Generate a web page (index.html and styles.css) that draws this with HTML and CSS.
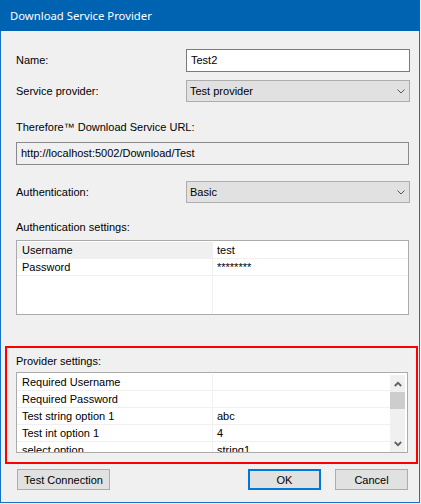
FILE: index.html
```html
<!DOCTYPE html>
<html>
<head>
<meta charset="utf-8">
<title>Download Service Provider</title>
<link rel="stylesheet" href="styles.css">
</head>
<body>
<div class="window">
  <div class="titlebar">Download Service Provider</div>
  <div class="content">
    <div class="field-row row-name">
      <span class="label">Name:</span>
      <div class="textbox">Test2</div>
    </div>
    <div class="field-row row-provider">
      <span class="label">Service provider:</span>
      <div class="combo">
        <span class="combo-text">Test provider</span>
        <svg class="chev" width="8" height="5" viewBox="0 0 8 5"><path d="M0.5 0.5 L4 4 L7.5 0.5"/></svg>
      </div>
    </div>
    <div class="caption cap-url">Therefore™ Download Service URL:</div>
    <div class="readonly-box">http://localhost:5002/Download/Test</div>
    <div class="field-row row-auth">
      <span class="label">Authentication:</span>
      <div class="combo">
        <span class="combo-text">Basic</span>
        <svg class="chev" width="8" height="5" viewBox="0 0 8 5"><path d="M0.5 0.5 L4 4 L7.5 0.5"/></svg>
      </div>
    </div>
    <div class="caption cap-auth">Authentication settings:</div>
    <div class="grid auth-grid">
      <div class="rows">
        <div class="grow"><div class="c1 sel">Username</div><div class="c2">test</div></div>
        <div class="grow"><div class="c1">Password</div><div class="c2">********</div></div>
        <div class="filler"><div class="c1"></div><div class="c2"></div></div>
      </div>
    </div>
    <div class="highlight">
      <div class="caption cap-prov">Provider settings:</div>
      <div class="grid prov-grid">
        <div class="rows">
          <div class="grow"><div class="c1">Required Username</div><div class="c2"></div></div>
          <div class="grow"><div class="c1">Required Password</div><div class="c2"></div></div>
          <div class="grow"><div class="c1">Test string option 1</div><div class="c2">abc</div></div>
          <div class="grow"><div class="c1">Test int option 1</div><div class="c2">4</div></div>
          <div class="grow"><div class="c1">select option</div><div class="c2">string1</div></div>
        </div>
        <div class="scrollbar">
          <div class="sb-btn"><svg width="8" height="6" viewBox="0 0 8 6"><path d="M0.8 5 L4 1.8 L7.2 5"/></svg></div>
          <div class="sb-thumb"></div>
          <div class="sb-track"></div>
          <div class="sb-btn"><svg width="8" height="6" viewBox="0 0 8 6"><path d="M0.8 1 L4 4.2 L7.2 1"/></svg></div>
        </div>
      </div>
    </div>
    <div class="buttons">
      <div class="btn btn-test">Test Connection</div>
      <div class="btn btn-ok">OK</div>
      <div class="btn btn-cancel">Cancel</div>
    </div>
  </div>
</div>
</body>
</html>
```
FILE: styles.css
```css
html, body {
  margin: 0;
  padding: 0;
  background: #f0f0f0;
}
body {
  font-family: "Liberation Sans", Arial, sans-serif;
  font-size: 11px;
  color: #000;
}
.window {
  width: 420px;
  height: 503px;
  box-sizing: border-box;
  border: 1px solid #1a6fc4;
  border-top: none;
  background: #f0f0f0;
  display: flex;
  flex-direction: column;
}
.titlebar {
  height: 31px;
  margin: 0 -1px;
  background: #0063b1;
  color: #fff;
  font-family: "Noto Sans", "Open Sans", sans-serif;
  font-size: 11.3px;
  line-height: 31px;
  padding-left: 10px;
  white-space: nowrap;
}
.content {
  flex: 1;
  padding-left: 15px;
  display: flex;
  flex-direction: column;
}
.field-row {
  width: 394px;
  display: flex;
  align-items: center;
}
.label {
  flex: 1;
  line-height: 15px;
}
.row-name { margin-top: 18px; height: 23px; }
.row-provider { margin-top: 8px; height: 22px; }
.row-auth { margin-top: 16px; height: 22px; }
.textbox {
  width: 224px;
  height: 23px;
  box-sizing: border-box;
  border: 1px solid #7a7a7a;
  background: #fff;
  padding-left: 4px;
  line-height: 21px;
}
.combo {
  width: 224px;
  height: 22px;
  box-sizing: border-box;
  border: 1px solid #adadad;
  background: #e1e1e1;
  padding-left: 3px;
  padding-right: 4px;
  display: flex;
  align-items: center;
}
.combo-text { flex: 1; line-height: 20px; }
.chev path {
  fill: none;
  stroke: #555;
  stroke-width: 1;
}
.caption {
  line-height: 15px;
  white-space: nowrap;
}
.cap-url { margin-top: 18px; }
.readonly-box {
  margin-top: 7px;
  width: 393px;
  height: 23px;
  box-sizing: border-box;
  border: 1px solid #8a8a8a;
  background: #f0f0f0;
  padding-left: 4px;
  line-height: 21px;
}
.cap-auth { margin-top: 17px; }
.grid {
  box-sizing: border-box;
  border: 1px solid #ababab;
  background: #fff;
  padding-top: 1px;
  display: flex;
  overflow: hidden;
}
.auth-grid {
  margin-top: 5px;
  width: 393px;
  height: 75px;
}
.rows {
  flex: 1;
  display: flex;
  flex-direction: column;
  overflow: hidden;
}
.grow {
  flex: none;
  display: flex;
  height: 17px;
  box-sizing: border-box;
  border-bottom: 1px solid #f0f0f0;
  line-height: 16px;
  white-space: nowrap;
}
.c1 {
  width: 196px;
  flex: none;
  box-sizing: border-box;
  border-right: 1px solid #f0f0f0;
  padding-left: 5px;
}
.c1.sel { background: #f0f0f0; }
.c2 {
  flex: 1;
  padding-left: 4px;
}
.filler {
  flex: 1;
  display: flex;
}
.highlight {
  margin-top: 31px;
  margin-left: -11px;
  width: 413px;
  height: 118px;
  box-sizing: border-box;
  border: 2px solid #ff0000;
  padding: 6px 8px 9px 9px;
}
.prov-grid {
  margin-top: 3px;
  width: 392px;
  height: 81px;
  padding-right: 2px;
}
.scrollbar {
  width: 15px;
  margin-top: 1px;
  background: #f0f0f0;
  display: flex;
  flex-direction: column;
}
.sb-btn {
  height: 17px;
  display: flex;
  align-items: center;
  justify-content: center;
}
.sb-btn path {
  fill: none;
  stroke: #606060;
  stroke-width: 1.8;
}
.sb-thumb {
  height: 17px;
  background: #cdcdcd;
}
.sb-track { flex: 1; }
.buttons {
  margin-top: 5px;
  width: 392px;
  height: 21px;
  display: flex;
}
.btn {
  height: 21px;
  box-sizing: border-box;
  border: 1px solid #adadad;
  background: #e1e1e1;
  display: flex;
  align-items: center;
  justify-content: center;
  white-space: nowrap;
}
.btn-test { width: 93px; margin-left: 1px; }
.btn-ok {
  width: 73px;
  margin-left: auto;
  border: 2px solid #0078d7;
}
.btn-cancel { width: 73px; margin-left: 14px; }
```
